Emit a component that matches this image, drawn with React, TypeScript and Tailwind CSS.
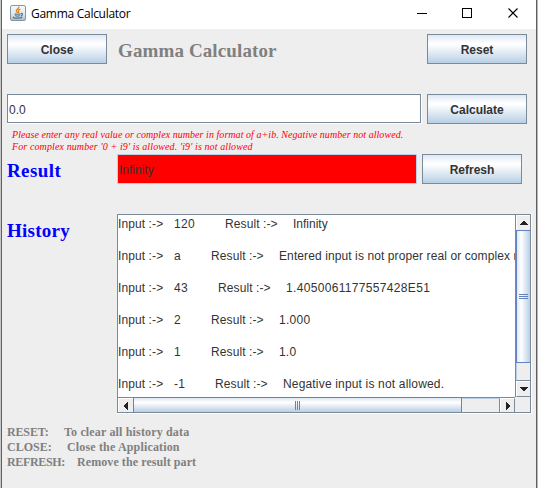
import React from "react";

const SERIF = "font-['Liberation_Serif',serif]";

function MetalButton({ label }: { label: string }) {
  return (
    <button className="h-[30px] w-[100px] shrink-0 border border-[#7a8a99] bg-[linear-gradient(to_bottom,#dde8f3_0%,#ffffff_30%,#ffffff_34%,#b8cfe5_100%)] pt-px text-[12px] leading-[28px] font-bold text-[#333333]">
      {label}
    </button>
  );
}

function JavaIcon() {
  return (
    <svg width="16" height="16" viewBox="0 0 16 16" className="shrink-0">
      <defs>
        <linearGradient id="tile" x1="0" y1="0" x2="0" y2="1">
          <stop offset="0" stopColor="#f7f9fa" />
          <stop offset="0.6" stopColor="#dfe6ea" />
          <stop offset="1" stopColor="#a9bac6" />
        </linearGradient>
      </defs>
      <rect x="0.5" y="0.5" width="15" height="15" rx="1.5" fill="url(#tile)" stroke="#8397a6" />
      <path d="M8.8 1.5C9.6 3.4 6 4.2 6.3 5.8C6.4 6.6 7.3 7.2 7.6 8M10.3 4.2C8.6 4.8 7.9 5.5 8.6 6.3C9 6.9 8.8 7.4 8.3 7.9" fill="none" stroke="#e8801e" strokeWidth="1.3" />
      <path d="M4.6 8.7C5.6 9.5 9.4 9.4 10.6 8.7M5.1 10.5C6.4 11.1 8.7 11.1 9.8 10.5M11 8.5C13.2 8.1 12.8 10.3 10.8 10.8M3.7 11.7C2.2 12.7 5 13.2 8 13.1C11 13 12.5 12.5 11.3 11.9" fill="none" stroke="#4d7896" strokeWidth="1.2" />
    </svg>
  );
}

type Row = { value: string; valueW: string; result: string; spacing: string };

const rows: Row[] = [
  { value: "120", valueW: "w-[51px]", result: "Infinity", spacing: "tracking-[0px]" },
  { value: "a", valueW: "w-[37px]", result: "Entered input is not proper real or complex number", spacing: "tracking-[0.1px]" },
  { value: "43", valueW: "w-[44px]", result: "1.4050061177557428E51", spacing: "tracking-[0.33px]" },
  { value: "2", valueW: "w-[37px]", result: "1.000", spacing: "tracking-[0.3px]" },
  { value: "1", valueW: "w-[37px]", result: "1.0", spacing: "tracking-[0.2px]" },
  { value: "-1", valueW: "w-[41px]", result: "Negative input is not allowed.", spacing: "tracking-[0.17px]" },
];

const notes = [
  { name: "RESET:", width: "w-[57px]", nameSpacing: "tracking-[-0.15px]", text: "To clear all history data", spacing: "tracking-[0.16px]" },
  { name: "CLOSE:", width: "w-[60px]", nameSpacing: "tracking-[0px]", text: "Close the Application", spacing: "tracking-[0.16px]" },
  { name: "REFRESH:", width: "w-[70px]", nameSpacing: "tracking-[-0.35px]", text: "Remove the result part", spacing: "tracking-[0.08px]" },
];

export default function App() {
  return (
    <div className="flex h-[488px] w-[538px] overflow-hidden bg-[#eeeeee] font-['Liberation_Sans',sans-serif] text-[12px] text-[#333333]">
      <div className="w-px bg-[#c8c8c8]" />
      <div className="w-px bg-[#606060]" />
      <div className="flex w-[534px] shrink-0 flex-col">
        <header className="flex h-[29px] shrink-0 items-center bg-white pl-2 pb-[3px]">
          <JavaIcon />
          <span className="ml-[5px] w-[386px] pt-[2px] font-['Open_Sans',sans-serif] text-[12px] leading-4 tracking-[-0.28px] whitespace-nowrap text-black">
            Gamma Calculator
          </span>
          <svg width="102" height="12" viewBox="0 0 102 12" fill="none" stroke="black" shapeRendering="crispEdges">
            <path d="M0 6.5H10M45.5 1.5H54.5V10.5H45.5Z" />
            <path d="M91.5 1.5L100.5 10.5M100.5 1.5L91.5 10.5" shapeRendering="auto" strokeWidth="1.1" />
          </svg>
        </header>

        <main className="flex grow flex-col pl-[5px]">
          <div className="mt-[5px] flex h-[30px] items-center">
            <MetalButton label="Close" />
            <h1 className={`ml-[10px] w-[310px] pt-[3px] pl-px text-[19px] leading-[30px] font-bold tracking-[0.12px] text-[#808080] ${SERIF}`}>Gamma Calculator</h1>
            <MetalButton label="Reset" />
          </div>

          <div className="mt-[30px] flex h-[30px]">
            <div className="mr-[5px] w-[415px] border-r border-b border-white">
              <div className="h-[29px] w-[414px] border border-[#7a8a99] bg-white pl-px leading-[30px]">0.0</div>
            </div>
            <MetalButton label="Calculate" />
          </div>

          <div className={`mt-[5px] flex h-6 flex-col pl-[5px] text-[10px] leading-3 whitespace-nowrap text-[#ff0000] italic ${SERIF}`}>
            <span className="tracking-[0.05px]">Please enter any real value or complex number in format of a+ib. Negative number not allowed.</span>
            <span className="tracking-[0.11px]">For complex number '0 + i9' is allowed. 'i9' is not allowed</span>
          </div>

          <div className="mt-px flex h-[30px]">
            <h2 className={`w-[110px] text-[19px] leading-[34px] font-bold tracking-[0.4px] text-[#0000ff] ${SERIF}`}>Result</h2>
            <div className="mr-[5px] w-[300px] border border-[#b8cfe5] bg-[#ff0000] pl-px leading-[30px]">Infinity</div>
            <MetalButton label="Refresh" />
          </div>

          <div className="mt-[30px] flex h-[200px]">
            <h2 className={`w-[110px] text-[19px] leading-[34px] font-bold tracking-[0.25px] text-[#0000ff] ${SERIF}`}>History</h2>
            <div className="h-[200px] w-[415px] border-r border-b border-white">
              <div className="flex h-[199px] w-[414px] flex-col border border-[#7a8a99]">
                <div className="flex h-[182px] shrink-0">
                  <div className="flex w-[397px] shrink-0 flex-col overflow-hidden bg-white pt-px">
                    {rows.map((row) => (
                      <div key={row.value} className="flex h-8 shrink-0 leading-4 whitespace-nowrap">
                        <span className="w-[56px] shrink-0 tracking-[0.1px]">Input :-&gt;</span>
                        <span className={`shrink-0 tracking-[0.33px] ${row.valueW}`}>{row.value}</span>
                        <span className="w-[68px] shrink-0 tracking-[0.1px]">Result :-&gt;</span>
                        <span className={row.spacing}>{row.result}</span>
                      </div>
                    ))}
                  </div>
                  <div className="flex w-[15px] shrink-0 flex-col border-l border-[#7a8a99]">
                    <div className="flex h-[15px] items-center justify-center border-t border-l border-white">
                      <svg width="8" height="4" shapeRendering="crispEdges" fill="#222222"><path d="M3 0h2v1h1v1h1v1h1v1H0V3h1V2h1V1h1Z" /></svg>
                    </div>
                    <div className="flex h-[133px] flex-col items-center justify-center gap-px border-y border-l border-[#6382bf] bg-[linear-gradient(to_right,#dde8f3_0%,#ffffff_32%,#b8cfe5_100%)]">
                      <div className="h-px w-[9px] bg-[#6382bf]" />
                      <div className="h-px w-[9px] bg-[#6382bf]" />
                      <div className="h-px w-[9px] bg-[#6382bf]" />
                    </div>
                    <div className="h-[18px] border-b border-b-[#7a8a99] border-l border-l-[#b8cfe5]" />
                    <div className="flex h-[16px] items-center justify-center border-t border-b border-l border-t-white border-l-white border-b-[#7a8a99]">
                      <svg width="8" height="4" shapeRendering="crispEdges" fill="#222222"><path d="M0 0h8v1H7v1H6v1H5v1H3V3H2V2H1V1H0Z" /></svg>
                    </div>
                  </div>
                </div>
                <div className="flex h-[15px] shrink-0">
                  <div className="flex w-[397px] border-t border-[#7a8a99]">
                    <div className="flex w-[15px] items-center justify-center border-t border-l border-white">
                      <svg width="4" height="8" shapeRendering="crispEdges" fill="#222222"><path d="M4 0v8H3V7H2V6H1V5H0V3h1V2h1V1h1V0Z" /></svg>
                    </div>
                    <div className="-mt-px flex w-[329px] items-center justify-center gap-px border-x border-t border-[#6382bf] bg-[linear-gradient(to_bottom,#dde8f3_0%,#ffffff_32%,#b8cfe5_100%)]">
                      <div className="h-[9px] w-px bg-[#6382bf]" />
                      <div className="h-[9px] w-px bg-[#6382bf]" />
                      <div className="h-[9px] w-px bg-[#6382bf]" />
                    </div>
                    <div className="w-[38px] border-t border-r border-t-[#b8cfe5] border-r-[#7a8a99]" />
                    <div className="flex w-[15px] items-center justify-center border-t border-r border-l border-t-white border-l-white border-r-[#7a8a99]">
                      <svg width="4" height="8" shapeRendering="crispEdges" fill="#222222"><path d="M0 0h1v1h1v1h1v1h1v2H3v1H2v1H1v1H0Z" /></svg>
                    </div>
                  </div>
                </div>
              </div>
            </div>
          </div>

          <div className={`mt-[11px] text-[12px] leading-[15px] font-bold whitespace-nowrap text-[#808080] ${SERIF}`}>
            {notes.map((note) => (
              <div key={note.name} className="flex">
                <span className={`${note.width} ${note.nameSpacing}`}>{note.name}</span>
                <span className={note.spacing}>{note.text}</span>
              </div>
            ))}
          </div>
        </main>
      </div>
      <div className="w-px bg-[#606060]" />
      <div className="w-px bg-[#b8b8b8]" />
    </div>
  );
}
